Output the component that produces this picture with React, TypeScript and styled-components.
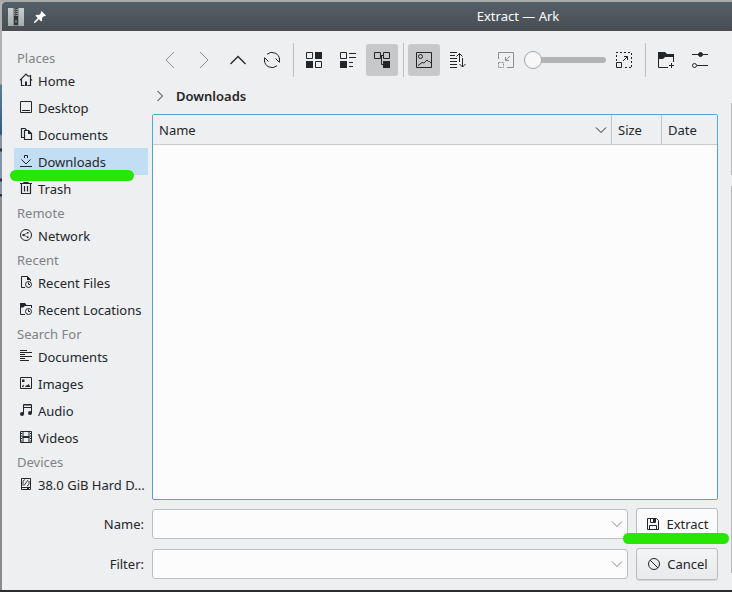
import React from 'react';
import styled, { createGlobalStyle, css } from 'styled-components';

const GlobalStyle = createGlobalStyle`
  *, *::before, *::after { box-sizing: border-box; }
  html, body, #root { height: 100%; }
  body {
    margin: 0;
    overflow: hidden;
    background: #9a9c9e;
    color: #232629;
    font: 13px/20px "Noto Sans", sans-serif;
  }
  button, input, select { font: inherit; color: inherit; }
`;

const Desktop = styled.div`
  height: 100%;
  padding: 2px 0 2px 2px;
  background:
    linear-gradient(#a9abad, #a9abad) top / 100% 2px no-repeat,
    linear-gradient(#2b2d30, #2b2d30) bottom / 100% 2px no-repeat,
    linear-gradient(#b0b1b3 0 84px, #5a7d99 85px, #2f5f80 134px, #8695a5 136px 148px,
      #30353a 149px 151px, #8695a5 152px 178px, #30353a 179px 181px, #8695a5 182px 194px,
      #30353a 194px 196px, #8b8c8e 197px);
`;

const Window = styled.div`
  display: flex;
  flex-direction: column;
  height: 100%;
  border-radius: 4px 0 0 0;
  overflow: hidden;
  background: #eeeff1;
`;

const TitleBar = styled.header`
  display: flex;
  align-items: center;
  flex: none;
  height: 29px;
  padding: 0 6px;
  gap: 10px;
  background: linear-gradient(#566069, #474d52);
  color: #fcfcfc;
`;

const Title = styled.h1`
  flex: 1;
  margin: 0 0 1px;
  padding-left: 254px;
  font-size: 13px;
  font-weight: 400;
  text-align: center;
`;

const Body = styled.div`
  display: flex;
  flex: 1;
  min-height: 0;
`;

const Sidebar = styled.nav`
  flex: none;
  width: 146px;
  padding: 16px 0 0 12px;
`;

const GroupTitle = styled.h2`
  height: 20px;
  margin: 0;
  padding: 1px 0 0 3px;
  color: #7f8285;
  font-size: 13px;
  font-weight: 400;
`;

const PlaceList = styled.ul`
  margin: 0;
  padding: 0;
  list-style: none;
`;

const PlaceItem = styled.li`
  position: relative;
`;

const PlaceLink = styled.a<{ $selected?: boolean }>`
  display: flex;
  align-items: center;
  gap: 4px;
  height: 27px;
  padding-left: 4px;
  color: #232629;
  text-decoration: none;
  white-space: nowrap;
  background: ${(p) => (p.$selected ? '#c1def5' : 'transparent')};
  svg { margin-bottom: 1px; }
`;

const Marker = styled.span<{ $place: 'sidebar' | 'button' }>`
  position: absolute;
  z-index: 2;
  height: 11px;
  border-radius: 6px;
  background: #27e604;
  pointer-events: none;
  ${(p) =>
    p.$place === 'sidebar'
      ? css`top: 22px; left: -4px; width: 124px;`
      : css`top: 25px; left: -13px; right: -11px;`}
`;

const Main = styled.main`
  display: flex;
  flex: 1;
  flex-direction: column;
  min-width: 0;
  padding: 12px 13px 10px 4px;
`;

const Toolbar = styled.div`
  display: flex;
  align-items: center;
  gap: 2px;
  height: 34px;
  padding: 0 2px;
`;

const ToolButton = styled.button<{ $active?: boolean }>`
  display: grid;
  place-items: center;
  flex: none;
  width: 32px;
  height: 32px;
  padding: 0;
  border: 0;
  border-radius: 3px;
  background: ${(p) => (p.$active ? '#c6c8ca' : 'transparent')};
  &:disabled { color: #8b8e90; }
`;

const Separator = styled.span`
  flex: none;
  width: 6px;
  height: 34px;
  background: linear-gradient(#bcbec0, #bcbec0) center / 1px 100% no-repeat;
`;

const Spacer = styled.span`
  flex: 1;
`;

const ZoomSlider = styled.input`
  appearance: none;
  width: 82px;
  height: 20px;
  margin: 0;
  background: transparent;
  &::-webkit-slider-runnable-track {
    height: 6px;
    border-radius: 3px;
    background: #b2b3b5;
  }
  &::-webkit-slider-thumb {
    appearance: none;
    width: 18px;
    height: 18px;
    margin-top: -6px;
    border: 1px solid #a5a7a9;
    border-radius: 50%;
    background: #f7f7f8;
  }
`;

const Breadcrumb = styled.div`
  display: flex;
  align-items: center;
  gap: 8px;
  height: 37px;
  padding-top: 1px;
  font-weight: 600;
`;

const Crumb = styled.a`
  color: inherit;
  text-decoration: none;
`;

const FileView = styled.div`
  flex: 1;
  min-height: 0;
  border: 1px solid #54a5cf;
  border-radius: 2px;
  background: #fcfcfc;
`;

const FileTable = styled.table`
  width: 100%;
  border-collapse: separate;
  border-spacing: 0;
  table-layout: fixed;
`;

const ColumnHead = styled.th<{ $width?: number }>`
  width: ${(p) => (p.$width ? `${p.$width}px` : 'auto')};
  height: 30px;
  padding: 0 6px;
  border-bottom: 1px solid #c9cbcd;
  background: #eeeff1;
  font-weight: 400;
  text-align: left;
  & + & { border-left: 1px solid #c1c3c5; }
`;

const SortHead = styled.span`
  display: flex;
  align-items: center;
  justify-content: space-between;
  margin-right: -2px;
`;

const Form = styled.form`
  display: grid;
  grid-template-columns: 76px 1fr 82px;
  grid-auto-rows: 32px;
  align-items: center;
  gap: 8px;
  margin: 8px 0 0 -84px;
`;

const FieldLabel = styled.label`
  text-align: right;
`;

const Combo = styled.div`
  display: grid;
  grid-template-columns: minmax(0, 1fr) 20px;
  align-items: center;
  height: 30px;
  border: 1px solid #bcbec0;
  border-radius: 3px;
  background: #fcfcfc;
  color: #85888a;
`;

const ComboInput = styled.input`
  height: 28px;
  min-width: 0;
  padding: 0 6px;
  border: 0;
  outline: 0;
  background: transparent;
  color: #232629;
`;

const ComboSelect = styled.select`
  appearance: none;
  grid-area: 1 / 1 / 2 / 3;
  height: 28px;
  padding: 0 6px;
  border: 0;
  outline: 0;
  background: transparent;
`;

const ComboArrow = styled.span`
  display: grid;
  grid-area: 1 / 2;
  place-items: center;
  pointer-events: none;
`;

const ButtonCell = styled.div`
  position: relative;
`;

const PushButton = styled.button`
  display: flex;
  align-items: center;
  justify-content: center;
  gap: 5px;
  width: 100%;
  height: 32px;
  padding: 0;
  border: 1px solid #b9bbbd;
  border-radius: 3px;
  background: linear-gradient(#f3f4f5, #e9eaec);
  box-shadow: 0 1px 0 #d5d6d8;
`;

const SaveButton = styled(PushButton)`
  background: #fbfbfc;
`;

const Edge = styled.div`
  display: flex;
  flex-direction: column;
  gap: 11px;
  width: 1px;
  padding: 72px 0 17px;
`;

const EdgeLine = styled.span<{ $grow?: boolean }>`
  flex: ${(p) => (p.$grow ? '1' : '0 0 72px')};
  background: #b5b7b9;
`;

type IconProps = { size?: number; children: React.ReactNode };

const Icon = ({ size = 16, children }: IconProps) => (
  <svg width={size} height={size} viewBox={`0 0 ${size} ${size}`} fill="none" stroke="currentColor" aria-hidden="true">
    {children}
  </svg>
);

const Solid = ({ d }: { d: string }) => <path d={d} fill="currentColor" stroke="none" />;

const placeIcons: Record<string, React.ReactNode> = {
  home: (
    <>
      <path d="M1.8 8.4 8 2.2l2.2 2.2M3.5 7v6.500H6.5M9.5 13.5h3V7l1.700 1.400M12.500 3v4" strokeWidth="1.2" />
      <Solid d="M7 9.500h2V14H7zM10.500 3h1v2h-1z" />
    </>
  ),
  desktop: <path d="M2.5 2.5h11v11h-11zM4 11.5h8" />,
  documents: (
    <>
      <path d="M6 11.5H3.5v-9H7L8.5 4M6.5 4.5h4l3 3v6h-7z" strokeWidth="1.2" />
      <Solid d="M10 4v4h4z" />
    </>
  ),
  downloads: <path d="M2 13.5h12M6.5 5V2.5h3V5M3.5 6.5 8 11l4.5-4.5" />,
  trash: <path d="M2 3.5h12M6 3V2.5h4V3M3.5 4v9.5h9V4M6.5 6v5.5M9.5 6v5.5" strokeWidth="1.2" />,
  network: (
    <>
      <circle cx="8" cy="8" r="5.5" />
      <path d="m9.5 5.8-4 2.2 4 2.2" strokeWidth=".6" />
      <Solid d="M4.5 7h2v2h-2zM9 5h1.6v1.6H9zM9 9.4h1.6V11H9z" />
    </>
  ),
  recentFiles: (
    <>
      <path d="M7 13.5H3.5v-11h6l3 3V7" />
      <Solid d="M9 2v4h4z" />
      <circle cx="10.5" cy="10.5" r="3" />
      <path d="M10.5 8.5v2H12" />
    </>
  ),
  recentFolders: (
    <>
      <path d="M7 13.5H2.5V5M7 4.5h6.5V7" />
      <Solid d="M2 2h5l1.5 2H14v1H7L5 6.5H2z" />
      <circle cx="10.5" cy="10.5" r="3" />
      <path d="M10.5 8.5v2H12" />
    </>
  ),
  text: <path d="M2 2.5h7M2 4.5h12M2 6.5h5M2 8.5h12M2 10.5h5M2 12.5h9" />,
  images: (
    <>
      <path d="M2.5 2.5h11v11h-11z" />
      <Solid d="M4 4.500h2.500V7H4zM4 12v-1l2-1.500L5.500 12zM7 12l1-1.500h1L10.500 9l2 3z" />
    </>
  ),
  audio: (
    <>
      <path d="M5.5 12V2.5h8V11M5.5 5.5h8" />
      <path d="M5 3.5h8.5" strokeWidth=".5" />
      <circle cx="4" cy="12" r="2" fill="currentColor" stroke="none" />
      <circle cx="12" cy="11" r="2" fill="currentColor" stroke="none" />
    </>
  ),
  videos: (
    <>
      <path d="M2.5 2.5h11v11h-11zM5 3v10M11 3v10" />
      <path d="M3.5 4v9M12.5 4v9" strokeDasharray="1 1.5" />
      <Solid d="M4.5 7h7v2h-7z" />
    </>
  ),
  disk: (
    <>
      <path d="M3.5 2.5h9v11h-9zM3.5 11.5h9" />
      <path d="M5 9.5V5l2-1.5M11 5v3.5L9 10M10 4 6 9.5" strokeWidth=".9" />
      <Solid d="M9 12h2v1H9z" />
    </>
  ),
};

type Place = { label: string; icon: string; selected?: boolean };

const groups: { title: string; places: Place[] }[] = [
  {
    title: 'Places',
    places: [
      { label: 'Home', icon: 'home' },
      { label: 'Desktop', icon: 'desktop' },
      { label: 'Documents', icon: 'documents' },
      { label: 'Downloads', icon: 'downloads', selected: true },
      { label: 'Trash', icon: 'trash' },
    ],
  },
  { title: 'Remote', places: [{ label: 'Network', icon: 'network' }] },
  {
    title: 'Recent',
    places: [
      { label: 'Recent Files', icon: 'recentFiles' },
      { label: 'Recent Locations', icon: 'recentFolders' },
    ],
  },
  {
    title: 'Search For',
    places: [
      { label: 'Documents', icon: 'text' },
      { label: 'Images', icon: 'images' },
      { label: 'Audio', icon: 'audio' },
      { label: 'Videos', icon: 'videos' },
    ],
  },
  { title: 'Devices', places: [{ label: '38.0 GiB Hard D...', icon: 'disk' }] },
];

const ArchiveLogo = () => (
  <svg width="16" height="18" viewBox="0 0 16 18" aria-hidden="true">
    <defs>
      <linearGradient id="metal" x2="0" y2="1">
        <stop stopColor="#c9cfd0" />
        <stop offset="1" stopColor="#a5acae" />
      </linearGradient>
    </defs>
    <path d="M0 0h16v18H0z" fill="url(#metal)" />
    <path d="M5 0h6v18H5z" fill="#8b9294" />
    <path d="M8 0v9" stroke="#34383b" strokeWidth="3" strokeDasharray="1 1" />
    <path d="M7.5 0v9" stroke="#555a5d" />
    <path d="M6 8h4v9H6z" fill="#303437" />
    <path d="M7 12h2v3H7z" fill="#686e71" />
  </svg>
);

const PinIcon = () => (
  <svg width="12" height="12" viewBox="0 0 12 12" fill="#fcfcfc" aria-hidden="true">
    <path d="m7.5 0 4.500 4.500-1.200.8-.8-.3-2 2 .2 2.500-1 1L5 8.300 1 12H0v-1l3.700-4-2.200-2.200 1-1L5 4l2-2-.3-.8z" />
  </svg>
);

const ArrowDown = () => (
  <svg width="12" height="8" viewBox="0 0 12 8" fill="none" stroke="currentColor" aria-hidden="true">
    <path d="m1 1.5 5 5 5-5" />
  </svg>
);

export default function App() {
  return (
    <>
      <GlobalStyle />
      <Desktop>
        <Window>
          <TitleBar>
            <ArchiveLogo />
            <PinIcon />
            <Title>Extract — Ark</Title>
          </TitleBar>
          <Body>
            <Sidebar aria-label="Places">
              {groups.map((group) => (
                <section key={group.title}>
                  <GroupTitle>{group.title}</GroupTitle>
                  <PlaceList>
                    {group.places.map((place) => (
                      <PlaceItem key={place.label}>
                        <PlaceLink href="#" $selected={place.selected}>
                          <Icon>{placeIcons[place.icon]}</Icon>
                          {place.label}
                        </PlaceLink>
                        {place.selected && <Marker $place="sidebar" />}
                      </PlaceItem>
                    ))}
                  </PlaceList>
                </section>
              ))}
            </Sidebar>
            <Main>
              <Toolbar role="toolbar">
                <ToolButton aria-label="Back" disabled>
                  <Icon size={22}><path d="m15 3-8 8 8 8" /></Icon>
                </ToolButton>
                <ToolButton aria-label="Forward" disabled>
                  <Icon size={22}><path d="m7 3 8 8-8 8" /></Icon>
                </ToolButton>
                <ToolButton aria-label="Parent folder">
                  <Icon size={22}><path d="m3.5 15 7.5-7.5 7.5 7.5" strokeWidth="1.3" /></Icon>
                </ToolButton>
                <ToolButton aria-label="Reload">
                  <Icon size={22}>
                    <path d="M6 5.300A7.500 7.500 0 0 1 18.500 11v2M16 16.700A7.500 7.500 0 0 1 3.500 11V9M3.500 8.500l4 4M14.500 9.500l4 4M3.500 9v4M18.500 9v4" />
                  </Icon>
                </ToolButton>
                <Separator />
                <ToolButton aria-label="Icons view">
                  <Icon size={22}>
                    <path d="M3.5 3.5h6v6h-6zM12.5 12.5h6v6h-6z" />
                    <Solid d="M12 3h7v7h-7zM3 12h7v7H3z" />
                  </Icon>
                </ToolButton>
                <ToolButton aria-label="Compact view">
                  <Icon size={22}>
                    <path d="M3.5 3.5h6v6h-6zM12 4.5h7M12 8.5h7M12 13.5h4M12 17.5h4" />
                    <Solid d="M3 12h7v7H3z" />
                  </Icon>
                </ToolButton>
                <ToolButton aria-label="Tree view" aria-pressed="true" $active>
                  <Icon size={22}>
                    <path d="M3.5 3.5h6v6h-6zM12.5 3.5h6v6h-6zM9.5 6.5h3M10.5 6.5v9H13" />
                    <Solid d="M12 12h7v7h-7z" />
                  </Icon>
                </ToolButton>
                <Separator />
                <ToolButton aria-label="Show preview" aria-pressed="true" $active>
                  <Icon size={22}>
                    <path d="M3.5 3.5h15v15h-15z" />
                    <circle cx="7.5" cy="7.5" r="2" />
                    <path d="m5 16.5 4-3 2 .5 3-3 1.5 1.5h1L18 14" />
                  </Icon>
                </ToolButton>
                <ToolButton aria-label="Sorting">
                  <Icon size={22}>
                    <path d="M3 3.5h7M3 6.5h5M3 9.5h7M3 12.5h7M3 15.5h7M3 18.5h7M12.5 4.5V13M9.5 7.5l3-3 3 3M15.5 9v9M12.5 15l3 3 3-3" />
                  </Icon>
                </ToolButton>
                <Spacer />
                <ToolButton aria-label="Zoom out" disabled>
                  <Icon size={22}>
                    <path d="M3.5 10V3.5h15v15H12" />
                    <path d="M3.5 13.5h5v5h-5z" strokeDasharray="2 1" />
                    <path d="m15 7-4.5 4.5M10.5 8v3.5H14" />
                  </Icon>
                </ToolButton>
                <ZoomSlider type="range" aria-label="Icon size" min={0} max={100} defaultValue={0} />
                <ToolButton aria-label="Zoom in">
                  <Icon size={22}>
                    <path d="M3 3.5h16M18.5 4v15M3.5 6v6M12 18.5h7" strokeDasharray="2 2" />
                    <path d="M3.5 13.5h5v5h-5zM10 12l4.5-4.5M11 7.5h3.5V11" />
                  </Icon>
                </ToolButton>
                <Separator />
                <ToolButton aria-label="New folder">
                  <Icon size={22}>
                    <path d="M13 18.5H3.5V7M10 5.5h8.5V13M16.5 14v5M14 16.5h5" />
                    <Solid d="M3 3h7l2 2h7v3h-9L8 10H3z" />
                  </Icon>
                </ToolButton>
                <ToolButton aria-label="Options">
                  <Icon size={22}>
                    <path d="M3 5.5h16M8 16.5h11" />
                    <circle cx="11.5" cy="5.5" r="2" fill="currentColor" />
                    <circle cx="5.5" cy="16.5" r="2" />
                  </Icon>
                </ToolButton>
              </Toolbar>
              <Breadcrumb>
                <Icon><path d="m5.500 3 5 5-5 5" /></Icon>
                <Crumb href="#">Downloads</Crumb>
              </Breadcrumb>
              <FileView>
                <FileTable>
                  <thead>
                    <tr>
                      <ColumnHead aria-sort="ascending">
                        <SortHead>
                          Name
                          <ArrowDown />
                        </SortHead>
                      </ColumnHead>
                      <ColumnHead $width={50}>Size</ColumnHead>
                      <ColumnHead $width={56}>Date</ColumnHead>
                    </tr>
                  </thead>
                </FileTable>
              </FileView>
              <Form onSubmit={(event) => event.preventDefault()}>
                <FieldLabel htmlFor="name">Name:</FieldLabel>
                <Combo>
                  <ComboInput id="name" type="text" />
                  <ComboArrow><ArrowDown /></ComboArrow>
                </Combo>
                <ButtonCell>
                  <SaveButton type="submit">
                    <Icon>
                      <path d="M2.5 2.5h9l2 2v9h-11zM5.5 3v3.5h5V3M4.5 13V9.5h7V13" />
                      <Solid d="M8 3h2v3H8z" />
                    </Icon>
                    Extract
                  </SaveButton>
                  <Marker $place="button" />
                </ButtonCell>
                <FieldLabel htmlFor="filter">Filter:</FieldLabel>
                <Combo>
                  <ComboSelect id="filter"><option value="" /></ComboSelect>
                  <ComboArrow><ArrowDown /></ComboArrow>
                </Combo>
                <PushButton type="button">
                  <Icon>
                    <circle cx="8" cy="8" r="5.5" />
                    <path d="m4 4 8 8" />
                  </Icon>
                  Cancel
                </PushButton>
              </Form>
            </Main>
            <Edge>
              <EdgeLine />
              <EdgeLine $grow />
            </Edge>
          </Body>
        </Window>
      </Desktop>
    </>
  );
}
